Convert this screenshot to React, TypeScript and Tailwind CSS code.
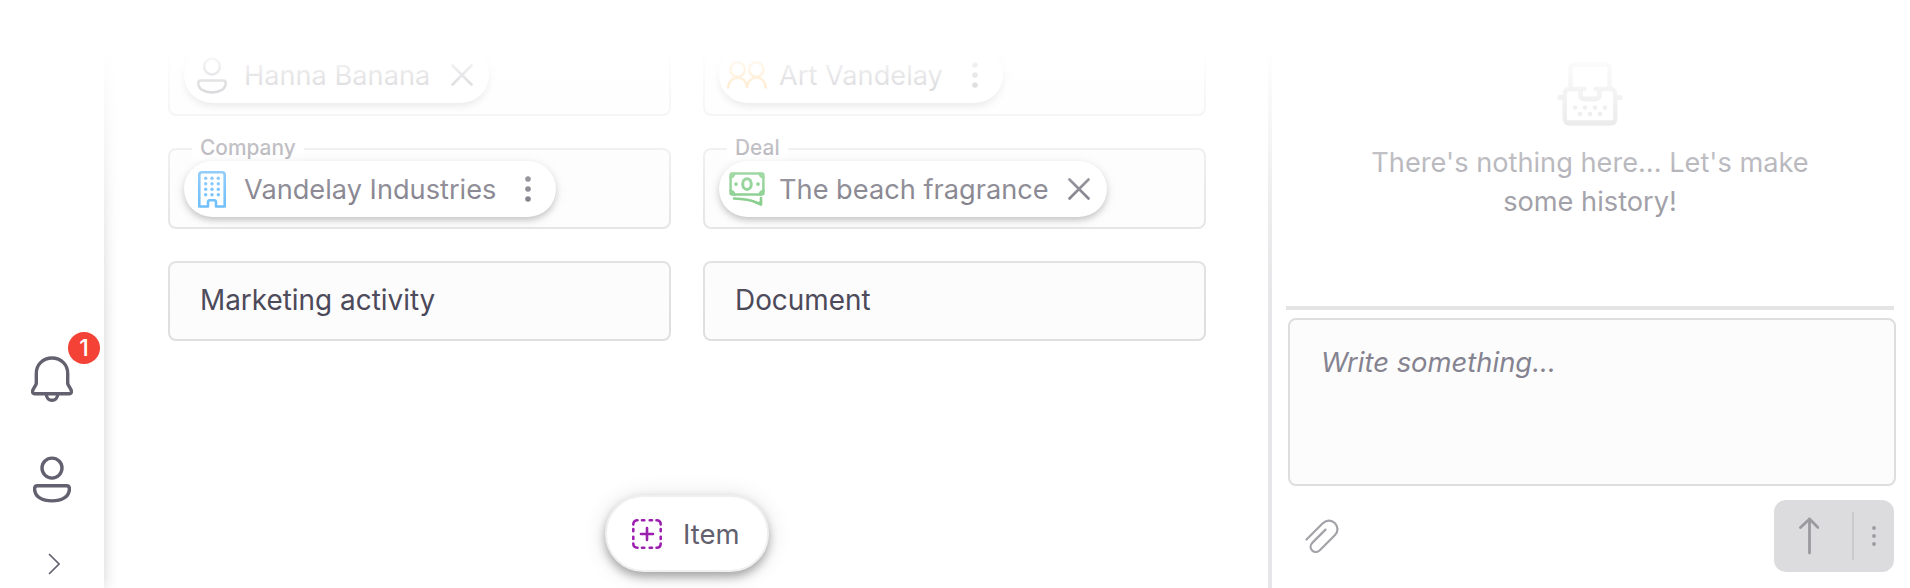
import type { ReactNode } from "react";

function PersonIcon({ className, stroke }: { className: string; stroke: number }) {
  return (
    <svg viewBox="0 0 38 46" className={className} fill="none" stroke="currentColor" strokeWidth={stroke}>
      <circle cx="19" cy="11.6" r="10" />
      <path d="M4.5 29.3H33.5Q36.4 29.3 36.4 32.2C36.4 40.5 28.5 44.4 19 44.4S1.6 40.5 1.6 32.2Q1.6 29.3 4.5 29.3Z" />
    </svg>
  );
}

function BellIcon() {
  return (
    <svg viewBox="0 0 42 46" className="h-[46px] w-[42px]" fill="none" stroke="currentColor" strokeWidth="3.4" strokeLinejoin="round">
      <path d="M5.3 17.5C5.3 8.5 12 2 21 2S36.7 8.5 36.7 17.5V27.5C37.5 30.5 40 32.5 40.4 35Q40.6 37.7 38 37.7H4Q1.4 37.7 1.6 35C2 32.5 4.5 30.5 5.3 27.5Z" />
      <path d="M15.3 38.5C15.5 42 18 44.3 21 44.3S26.5 42 26.7 38.5" />
    </svg>
  );
}

function BuildingIcon() {
  const cols = [7.7, 14, 20.3];
  const rows = [7.3, 12.8, 18.3, 23.8];
  return (
    <svg viewBox="0 0 28 37" className="h-[37px] w-7" fill="none" stroke="currentColor" strokeWidth="2.6" strokeLinejoin="round">
      <path d="M4 1.3H24Q26.7 1.3 26.7 4.1V35.5H18V31Q18 29.3 16.3 29.3H11.7Q10 29.3 10 31V35.5H1.3V4.1Q1.3 1.3 4 1.3Z" />
      {rows.map((y) => cols.map((x) => <circle key={`${x}-${y}`} cx={x} cy={y} r="1.7" fill="currentColor" stroke="none" />))}
    </svg>
  );
}

function PeopleIcon() {
  return (
    <svg viewBox="0 0 40 28" className="h-7 w-10" fill="none" stroke="currentColor" strokeWidth="2.4" strokeLinecap="round">
      <circle cx="10.7" cy="8.5" r="7.2" />
      <circle cx="29.3" cy="8.5" r="7.2" />
      <path d="M1.2 26.5C2 20 5.5 16.8 10.7 16.8S19.3 20 20 26.5C20.7 20 24.1 16.8 29.3 16.8S38 20 38.8 26.5" />
    </svg>
  );
}

function MoneyIcon() {
  return (
    <svg viewBox="0 0 36 35" className="h-[35px] w-9" fill="none" stroke="currentColor" strokeWidth="2.5" strokeLinejoin="round" strokeLinecap="round">
      <rect x="1.6" y="1.6" width="32.8" height="21" rx="1.5" />
      <path d="M1.6 5.2Q4.8 5 5.2 1.6M34.4 5.2Q31.2 5 30.8 1.6M1.6 19Q4.8 19.2 5.2 22.6M34.4 19Q31.2 19.2 30.8 22.6" />
      <ellipse cx="18" cy="12.1" rx="4.3" ry="5.4" strokeWidth="3" />
      <circle cx="7" cy="12.1" r="1.9" fill="currentColor" stroke="none" />
      <circle cx="29" cy="12.1" r="1.9" fill="currentColor" stroke="none" />
      <path d="M5 26.5C14 26.7 22 27.9 28.5 31L32 32.5V26" strokeWidth="2.6" />
      <path d="M23 28.5L32 33V28L30 30.5Z" fill="currentColor" strokeWidth="1" />
    </svg>
  );
}

function CloseIcon() {
  return (
    <svg viewBox="0 0 22 22" className="size-[22px]" fill="none" stroke="currentColor" strokeWidth="2.6" strokeLinecap="round">
      <path d="M1.5 1.5L20.5 20.5M20.5 1.5L1.5 20.5" />
    </svg>
  );
}

function DotsIcon({ className }: { className: string }) {
  return (
    <svg viewBox="0 0 6 26" className={className} fill="currentColor">
      <circle cx="3" cy="3" r="2.8" />
      <circle cx="3" cy="13" r="2.8" />
      <circle cx="3" cy="23" r="2.8" />
    </svg>
  );
}

function TypewriterIcon() {
  return (
    <svg viewBox="0 0 66 66" className="h-[66px] w-[66px]" fill="none" stroke="currentColor" strokeWidth="4.4" strokeLinecap="round" strokeLinejoin="round">
      <path d="M13.5 26V6.5Q13.5 3.6 16.5 3.6H49.5Q52.5 3.6 52.5 6.5V26" />
      <path d="M27.5 28H13Q7.7 28 7.7 33.5V57Q7.7 62.5 13 62.5H53Q58.3 62.5 58.3 57V33.5Q58.3 28 53 28H38.5" />
      <path d="M10 61.5H56" />
      <path d="M23 29Q24 30 23.5 33Q23 38 28.5 38H37.5Q43 38 42.5 33Q42 30 43 29" strokeWidth="4.8" />
      <path d="M6 36.5H2.8M60 36.5H63.2" strokeWidth="5" />
      {[18, 28, 38, 48].map((x) => <circle key={x} cx={x} cy="46.5" r="2.3" fill="currentColor" stroke="none" />)}
      {[23, 33, 43].map((x) => <circle key={x} cx={x} cy="53" r="2.3" fill="currentColor" stroke="none" />)}
    </svg>
  );
}

function Field({ label, children }: { label?: string; children: ReactNode }) {
  return (
    <div className={`relative flex items-center rounded-lg border-2 border-[#dfdfdf] bg-[#fcfcfc] pl-3.5 ${label ? "h-[81px]" : "h-20"}`}>
      {label && (
        <span className="absolute -top-[15px] left-[22px] bg-white px-2 text-[20.9px] leading-[26px] font-[450] text-[#716f7b]">{label}</span>
      )}
      {children}
    </div>
  );
}

function Chip({ icon, text, action, className }: { icon: ReactNode; text: string; action: ReactNode; className: string }) {
  return (
    <div className={`relative flex h-14 items-center rounded-full bg-white text-[27.2px] whitespace-nowrap text-[#504d5c] shadow-[0_3px_6px_rgba(0,0,0,0.26),0_1px_14px_rgba(0,0,0,0.09)] ${className}`}>
      <span className="flex w-14 shrink-0 justify-center">{icon}</span>
      <span className="flex-1 pt-0.5 pl-1">{text}</span>
      <span className="flex w-[22px] shrink-0 justify-center">{action}</span>
    </div>
  );
}

export default function App() {
  return (
    <div className="relative flex h-[588px] w-full overflow-hidden bg-white font-[Inter,sans-serif] text-[#464354]">
      <aside className="z-10 flex w-[104px] shrink-0 flex-col items-center bg-white pt-[356px] text-[#63606f] shadow-[0_0_14px_rgba(0,0,0,0.18)]">
        <div className="relative">
          <BellIcon />
          <span className="absolute -top-6 left-[37px] flex size-8 items-center justify-center rounded-full bg-[#f44336] text-[23px] font-medium text-white">1</span>
        </div>
        <PersonIcon className="mt-[54px] h-[47px] w-[38px]" stroke={3.4} />
        <svg viewBox="0 0 12 22" className="mt-[50px] ml-1 h-[22px] w-3" fill="none" stroke="currentColor" strokeWidth="1.6">
          <path d="M1 1L11 11L1 21" />
        </svg>
      </aside>

      <main className="relative flex-1 pt-9 pr-[62px] pl-16">
        <div className="grid grid-cols-2 gap-8">
          <Field>
            <Chip className="mb-0.5 w-[305px] pr-4" text="Hanna Banana" icon={<PersonIcon className="h-[37px] w-[30px]" stroke={3.2} />} action={<CloseIcon />} />
          </Field>
          <Field>
            <Chip className="mb-0.5 w-[284px] pr-[17px]" text="Art Vandelay" icon={<span className="text-[#ff9f1a]"><PeopleIcon /></span>} action={<DotsIcon className="h-[26px] w-1.5" />} />
          </Field>
          <Field label="Company">
            <Chip className="mt-px w-[372px] pr-[17px]" text="Vandelay Industries" icon={<span className="text-[#3ba7f8]"><BuildingIcon /></span>} action={<DotsIcon className="h-[26px] w-1.5" />} />
          </Field>
          <Field label="Deal">
            <Chip className="mt-px w-[388px] pr-[17px]" text="The beach fragrance" icon={<span className="text-[#58bb5f]"><MoneyIcon /></span>} action={<CloseIcon />} />
          </Field>
          <Field>
            <span className="-mt-px pl-4 text-[27.9px]">Marketing activity</span>
          </Field>
          <Field>
            <span className="-mt-px pl-4 text-[27.9px]">Document</span>
          </Field>
        </div>
        <button className="absolute top-[495px] left-[501px] flex h-[77px] w-[164px] items-center rounded-full border-2 border-[#f0f0f0] bg-white pl-[25px] text-[27.5px] text-[#625f6e] shadow-[0_5px_10px_rgba(0,0,0,0.3),0_2px_24px_rgba(0,0,0,0.12)]">
          <svg viewBox="0 0 30 30" className="size-[30px]" fill="none" stroke="#9c1fb0" strokeWidth="2.6" strokeLinecap="round">
            <path d="M1.3 5.5Q1.3 1.3 5.5 1.3M24.5 1.3Q28.7 1.3 28.7 5.5M28.7 24.5Q28.7 28.7 24.5 28.7M5.5 28.7Q1.3 28.7 1.3 24.5" />
            <path d="M10 1.3H12.3M17.7 1.3H20M10 28.7H12.3M17.7 28.7H20M1.3 10V12.3M1.3 17.7V20M28.7 10V12.3M28.7 17.7V20M15 9V21M9 15H21" />
          </svg>
          <span className="pt-0.5 pl-[21px]">Item</span>
        </button>
      </main>

      <section className="flex w-[642px] shrink-0 flex-col border-l-4 border-[#e6e6e8] pr-4">
        <div className="ml-3.5 flex h-[310px] flex-col items-center border-b-4 border-[#e4e4e5] pt-[61px]">
          <div className="text-[#c8c8cc]"><TypewriterIcon /></div>
          <p className="mt-4 w-[470px] text-center text-[27.2px] leading-[39px] text-[#7b7984]">There's nothing here... Let's make some history!</p>
        </div>
        <div className="mt-2 ml-4 h-[168px] w-[608px] rounded-lg border-2 border-[#dedede] bg-[#fcfcfc] pt-6 pl-[31px] text-[27.4px] leading-9 text-[#858390] italic">Write something...</div>
        <div className="mt-3.5 flex h-[72px] items-center justify-between pl-[33px]">
          <svg viewBox="0 0 34 34" className="size-[34px]" fill="none" stroke="#a3a2a8" strokeWidth="2.2" strokeLinecap="round" strokeLinejoin="round">
            <path d="M1.5 20.5L17.5 4.5C21 1 26 .5 29.8 4C33.5 7.7 33.3 12.8 29.8 16.3L14.8 31.3C12.5 33.5 9.3 33.5 7.2 31.5C5 29.3 5 26.2 7.2 23.9L20.5 10.6" />
          </svg>
          <div className="flex h-[72px] w-[120px] items-center rounded-xl bg-[#dcdcde] text-[#9b9a9f]">
            <svg viewBox="0 0 20 38" className="ml-[25px] h-[38px] w-5" fill="none" stroke="currentColor" strokeWidth="2.8" strokeLinecap="round" strokeLinejoin="round">
              <path d="M10.5 36V2M1.5 10.5L10.5 2L19 10.5" />
            </svg>
            <span className="ml-[33px] h-12 w-0.5 bg-[#cbcbcd]" />
            <svg viewBox="0 0 4 20" className="ml-[18px] h-5 w-1" fill="currentColor">
              <circle cx="2" cy="2" r="1.9" />
              <circle cx="2" cy="10" r="1.9" />
              <circle cx="2" cy="18" r="1.9" />
            </svg>
          </div>
        </div>
      </section>

      <div className="pointer-events-none absolute inset-x-0 top-0 z-20 h-[320px] bg-[linear-gradient(to_bottom,#fff_0px,#fff_50px,rgba(255,255,255,0.93)_62px,rgba(255,255,255,0.82)_85px,rgba(255,255,255,0.55)_150px,rgba(255,255,255,0.3)_200px,rgba(255,255,255,0.12)_260px,rgba(255,255,255,0)_320px)]" />
    </div>
  );
}
